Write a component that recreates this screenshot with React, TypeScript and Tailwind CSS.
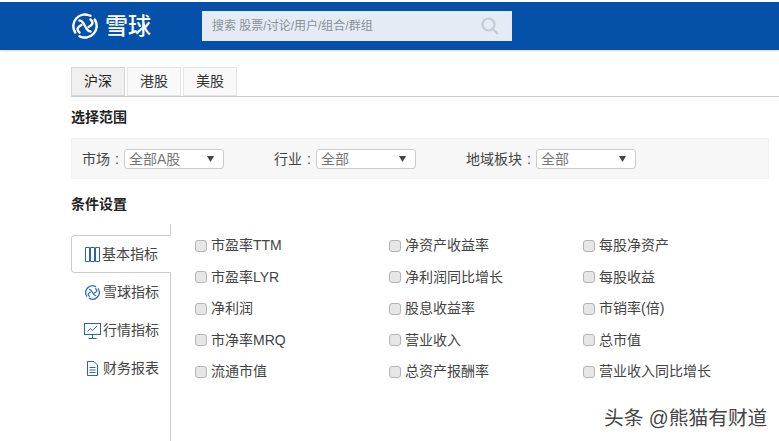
import React from "react";

const cols = [
  ["市盈率TTM", "市盈率LYR", "净利润", "市净率MRQ", "流通市值"],
  ["净资产收益率", "净利润同比增长", "股息收益率", "营业收入", "总资产报酬率"],
  ["每股净资产", "每股收益", "市销率(倍)", "总市值", "营业收入同比增长"],
];

function Logo({ size, color, sw }: { size: number; color: string; sw: number }) {
  return (
    <svg width={size} height={size} viewBox="0 0 26 26" fill="none" stroke={color} strokeWidth={sw} strokeLinecap="round">
      <path d="M18.500 2.800A11.700 11.700 0 0 0 3.200 19.500" />
      <path d="M7.500 23.200A11.700 11.700 0 0 0 22.800 6.500" />
      <path d="M7.500 7.500c2.500 0 3.800 2 5.500 5.500s3 5.500 5.500 5.500" />
      <path d="M7.500 19.500c-1.500-1.200-2-2.500-2-3.500s1.500-2.500 4-4M18.500 6.500c1.500 1.200 2 2.500 2 3.500s-1.500 2.500-4 4" />
    </svg>
  );
}

function Select({ value }: { value: string }) {
  return (
    <div className="w-[100px] h-5 bg-white border border-[#cccccc] rounded-[3px] flex items-center justify-between pl-1 pr-[9px] text-[14px] text-[#777777]">
      <span>{value}</span>
      <svg width="7" height="6" viewBox="0 0 7 6"><path d="M0 0h7L3.500 6z" fill="#444" /></svg>
    </div>
  );
}

function Filter({ label, value, w }: { label: string; value: string; w: string }) {
  return (
    <div className={`flex items-center ${w}`}>
      <span className="text-[14px] text-[#444444] whitespace-nowrap">{label}</span>
      <span className="w-[14px] text-center text-[14px] text-[#444444]">:</span>
      <Select value={value} />
    </div>
  );
}

const side = [
  { t: "雪球指标", i: <Logo size={15} color="#2f6db5" sw={2.200} /> },
  {
    t: "行情指标",
    i: (
      <svg width="17" height="17" viewBox="0 0 17 17" fill="none" stroke="#2a64a5" strokeWidth="1">
        <rect x="0.500" y="1.500" width="16" height="11" />
        <path d="M3.500 9.500l3-3 2 2 4.500-4.500M8.500 12.500v4M4.500 16.500h8" />
      </svg>
    ),
  },
  {
    t: "财务报表",
    i: (
      <svg width="11" height="15" viewBox="0 0 11 15" fill="none" stroke="#2a64a5" strokeWidth="1">
        <path d="M.500.500h6.500l3.500 3.500v10.500H.500zM2.500 6.500h6M2.500 9h6M2.500 11.500h6" />
      </svg>
    ),
  },
];

function Tab({ t, active }: { t: string; active?: boolean }) {
  return (
    <div className={`w-[54px] h-[29px] border flex items-center justify-center text-[14px] ${active ? "bg-[#f0f0f0] border-[#d5d5d5] text-[#222222]" : "bg-[#f9f9f9] border-[#e5e5e5] text-[#333333]"}`}>{t}</div>
  );
}

export default function App() {
  return (
    <div className="relative w-[779px] h-[441px] overflow-hidden bg-white font-['Liberation_Sans','Noto_Sans_CJK_SC',sans-serif]">
      <div className="mt-0.5 h-[48px] bg-[#0550a8] flex items-center pl-[72px] shadow-[0_1px_2px_rgba(0,0,0,0.15)]">
        <div className="flex items-center w-[130px] gap-[7px] text-white">
          <Logo size={26} color="#ffffff" sw={2.400} />
          <span className="text-[23px] leading-none font-medium">雪球</span>
        </div>
        <div className="w-[310px] h-[30px] bg-[#e4ebf5] flex items-center justify-between pl-[10px] pr-[13px]">
          <span className="text-[12px] text-[#8a8f99]">搜索 股票/讨论/用户/组合/群组</span>
          <svg width="18" height="18" viewBox="0 0 18 18" fill="none" stroke="#c6cbd2" strokeWidth="2.200">
            <circle cx="7.500" cy="7.500" r="6" />
            <path d="M12 12l5 5" />
          </svg>
        </div>
      </div>

      <div className="pl-[71px]">
        <div className="mt-[17px] flex gap-0.5 border-b border-[#cccccc] h-[30px]">
          <Tab t="沪深" active />
          <Tab t="港股" />
          <Tab t="美股" />
        </div>

        <div className="mt-[11px] h-[18px] leading-[18px] text-[14px] font-bold text-[#222222]">选择范围</div>

        <div className="mt-[12px] w-[698px] h-[41px] bg-[#f7f7f7] border border-[#f2f2f2] flex items-center pl-[10px] pt-[1px]">
          <Filter label="市场" value="全部A股" w="w-[192px]" />
          <Filter label="行业" value="全部" w="w-[192px]" />
          <Filter label="地域板块" value="全部" w="" />
        </div>

        <div className="mt-[16px] h-[18px] leading-[18px] text-[14px] font-bold text-[#222222]">条件设置</div>

        <div className="mt-[11px] flex">
          <div className="w-[100px] h-[221px] flex flex-col">
            <div className="h-[11px] border-r border-[#cccccc]" />
            <div className="h-[38px] border border-r-0 border-[#cccccc] rounded-l-[4px] bg-white flex items-center gap-[2px] pl-[13px] text-[14px] text-[#444444]">
              <svg width="15" height="15" viewBox="0 0 15 15" fill="none" stroke="#2a64a5" strokeWidth="1">
                <path d="M.500.500h4v14h-4zM5.500.500h4v14h-4zM10.500.500h4v14h-4z" />
              </svg>
              <span>基本指标</span>
            </div>
            <div className="flex-1 border-r border-[#cccccc] flex flex-col">
              {side.map((s) => (
                <div key={s.t} className="h-[38px] flex items-center text-[14px] text-[#444444]">
                  <span className="ml-[13px] w-[17px] mr-[2px] flex justify-center">{s.i}</span>
                  <span className="whitespace-nowrap">{s.t}</span>
                </div>
              ))}
            </div>
          </div>
          <div className="flex pl-[24px] pt-[6px]">
            {cols.map((c, i) => (
              <div key={i} className="w-[194px] flex flex-col">
                {c.map((t) => (
                  <div key={t} className="h-[31.500px] flex items-center gap-[4px] text-[14px] text-[#444444]">
                    <span className="w-[12px] h-[12px] rounded-[3px] border border-[#b5b5b5] bg-[#e6e6e6]" />
                    <span className="whitespace-nowrap">{t}</span>
                  </div>
                ))}
              </div>
            ))}
          </div>
        </div>
      </div>

      <div className="absolute left-[604px] top-[406px] text-[19.700px] leading-[24px] text-[#444444] whitespace-nowrap">头条 @熊猫有财道</div>
    </div>
  );
}
